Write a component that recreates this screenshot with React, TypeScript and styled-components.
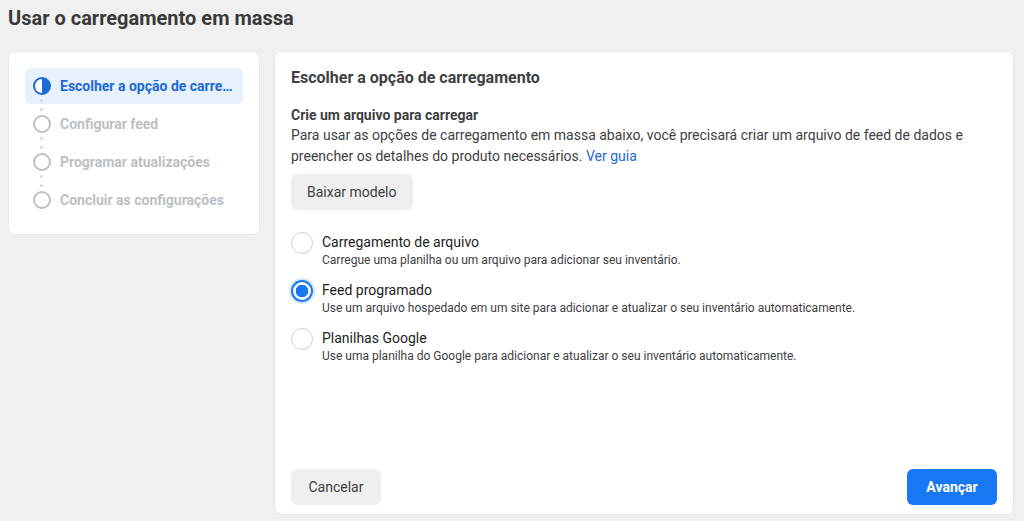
import styled, { createGlobalStyle } from 'styled-components';

const GlobalStyle = createGlobalStyle`
  html, body {
    margin: 0;
    padding: 0;
    background: #f0f0f0;
    font-family: Roboto, "Liberation Sans", Arial, sans-serif;
    color: #1c1e21;
  }
`;

const steps = [
  'Escolher a opção de carregamento',
  'Configurar feed',
  'Programar atualizações',
  'Concluir as configurações',
];

const options = [
  {
    title: 'Carregamento de arquivo',
    text: 'Carregue uma planilha ou um arquivo para adicionar seu inventário.',
  },
  {
    title: 'Feed programado',
    text: 'Use um arquivo hospedado em um site para adicionar e atualizar o seu inventário automaticamente.',
  },
  {
    title: 'Planilhas Google',
    text: 'Use uma planilha do Google para adicionar e atualizar o seu inventário automaticamente.',
  },
];

const StepIcon = ({ active }: { active: boolean }) =>
  active ? (
    <svg width="18" height="18" viewBox="0 0 18 18">
      <circle cx="9" cy="9" r="8" fill="#fff" stroke="#1b6ad6" strokeWidth="2" />
      <path d="M9 1 A8 8 0 0 1 9 17 Z" fill="#1b6ad6" />
    </svg>
  ) : (
    <svg width="18" height="18" viewBox="0 0 18 18">
      <circle cx="9" cy="9" r="8" fill="#fff" stroke="#bcc0c4" strokeWidth="2" />
    </svg>
  );

const App = () => {
  const selected = 1;

  return (
    <Page>
      <GlobalStyle />
      <Title>Usar o carregamento em massa</Title>
      <Columns>
        <StepsCard>
          {steps.map((label, i) => (
            <Step key={label} active={i === 0} last={i === steps.length - 1}>
              <StepIcon active={i === 0} />
              <StepLabel active={i === 0}>{label}</StepLabel>
            </Step>
          ))}
        </StepsCard>

        <MainCard>
          <CardTitle>Escolher a opção de carregamento</CardTitle>
          <SubTitle>Crie um arquivo para carregar</SubTitle>
          <Paragraph>
            Para usar as opções de carregamento em massa abaixo, você precisará criar um arquivo
            de feed de dados e preencher os detalhes do produto necessários.{' '}
            <GuideLink>Ver guia</GuideLink>
          </Paragraph>
          <GrayButton>Baixar modelo</GrayButton>

          <Options>
            {options.map((opt, i) => (
              <Option key={opt.title}>
                <Radio checked={i === selected} />
                <OptionText>
                  <OptionTitle>{opt.title}</OptionTitle>
                  <OptionDesc>{opt.text}</OptionDesc>
                </OptionText>
              </Option>
            ))}
          </Options>

          <Footer>
            <FooterButton>Cancelar</FooterButton>
            <PrimaryButton>Avançar</PrimaryButton>
          </Footer>
        </MainCard>
      </Columns>
    </Page>
  );
};

export default App;

const Page = styled.div`
  height: 521px;
  box-sizing: border-box;
  padding: 8px 11px 7px 9px;
  display: flex;
  flex-direction: column;
`;

const Title = styled.h1`
  margin: 0 0 24px -1px;
  font-size: 20px;
  line-height: 20px;
  font-weight: 700;
  color: #3a3a3a;
`;

const Columns = styled.div`
  flex: 1;
  display: grid;
  grid-template-columns: 250px 1fr;
  gap: 16px;
  align-items: start;
  min-height: 0;
`;

const Card = styled.div`
  background: #fff;
  border-radius: 6px;
  box-shadow: 0 0 0 1px rgba(0, 0, 0, 0.03);
  box-sizing: border-box;
`;

const StepsCard = styled(Card)`
  padding: 16px;
  display: flex;
  flex-direction: column;
  gap: 2px;
`;

const Step = styled.div<{ active: boolean; last: boolean }>`
  position: relative;
  height: 36px;
  display: flex;
  align-items: center;
  gap: 9px;
  padding: 0 8px;
  border-radius: 6px;
  background: ${(p) => (p.active ? '#e7f0fd' : 'transparent')};
  svg {
    flex-shrink: 0;
  }
  &::after {
    content: '';
    display: ${(p) => (p.last ? 'none' : 'block')};
    position: absolute;
    left: 15px;
    top: 31px;
    width: 3px;
    height: 3px;
    border-radius: 50%;
    background: #d4d7db;
    box-shadow: 0 9px 0 #d4d7db;
    z-index: 1;
  }
`;

const StepLabel = styled.span<{ active: boolean }>`
  font-size: 14px;
  font-weight: 700;
  color: ${(p) => (p.active ? '#1b6ad6' : '#bcc0c4')};
  white-space: nowrap;
  overflow: hidden;
  text-overflow: ellipsis;
`;

const MainCard = styled(Card)`
  height: 100%;
  padding: 16px 16px 8px;
  display: flex;
  flex-direction: column;
  align-items: flex-start;
`;

const CardTitle = styled.h2`
  margin: 0 0 17px;
  font-size: 16px;
  line-height: 20px;
  font-weight: 700;
  color: #3e4042;
`;

const SubTitle = styled.div`
  font-size: 14px;
  line-height: 20px;
  font-weight: 700;
  color: #3e4042;
`;

const Paragraph = styled.p`
  margin: 0 0 7px;
  font-size: 14px;
  line-height: 21px;
  color: #3e4042;
  max-width: 690px;
`;

const GuideLink = styled.a`
  color: #1b6ad6;
  cursor: pointer;
`;

const BaseButton = styled.button`
  height: 36px;
  padding: 0 16px;
  border: none;
  border-radius: 6px;
  font-family: inherit;
  font-size: 14px;
  cursor: pointer;
`;

const GrayButton = styled(BaseButton)`
  background: #efefef;
  color: #3e4042;
  font-weight: 400;
`;

const FooterButton = styled(GrayButton)`
  min-width: 90px;
`;

const PrimaryButton = styled(BaseButton)`
  background: #1877f2;
  color: #fff;
  font-weight: 700;
  min-width: 90px;
`;

const Options = styled.div`
  margin-top: 22px;
  display: flex;
  flex-direction: column;
  gap: 12px;
`;

const Option = styled.label`
  display: flex;
  align-items: flex-start;
  gap: 9px;
`;

const Radio = styled.span<{ checked: boolean }>`
  flex-shrink: 0;
  width: 22px;
  height: 22px;
  box-sizing: border-box;
  border-radius: 50%;
  border: ${(p) => (p.checked ? '2px solid #1877f2' : '1px solid #ccd0d5')};
  background: ${(p) => (p.checked ? 'radial-gradient(circle, #1877f2 0 6px, #fff 6.6px)' : '#fff')};
  box-shadow: ${(p) => (p.checked ? '0 0 0 2px #d6e6fc' : 'none')};
`;

const OptionText = styled.div`
  display: flex;
  flex-direction: column;
`;

const OptionTitle = styled.span`
  font-size: 14px;
  line-height: 20px;
  color: #1c1e21;
`;

const OptionDesc = styled.span`
  font-size: 12px;
  line-height: 16px;
  color: #3e4042;
`;

const Footer = styled.div`
  margin-top: auto;
  align-self: stretch;
  display: flex;
  justify-content: space-between;
  padding-bottom: 1px;
`;
